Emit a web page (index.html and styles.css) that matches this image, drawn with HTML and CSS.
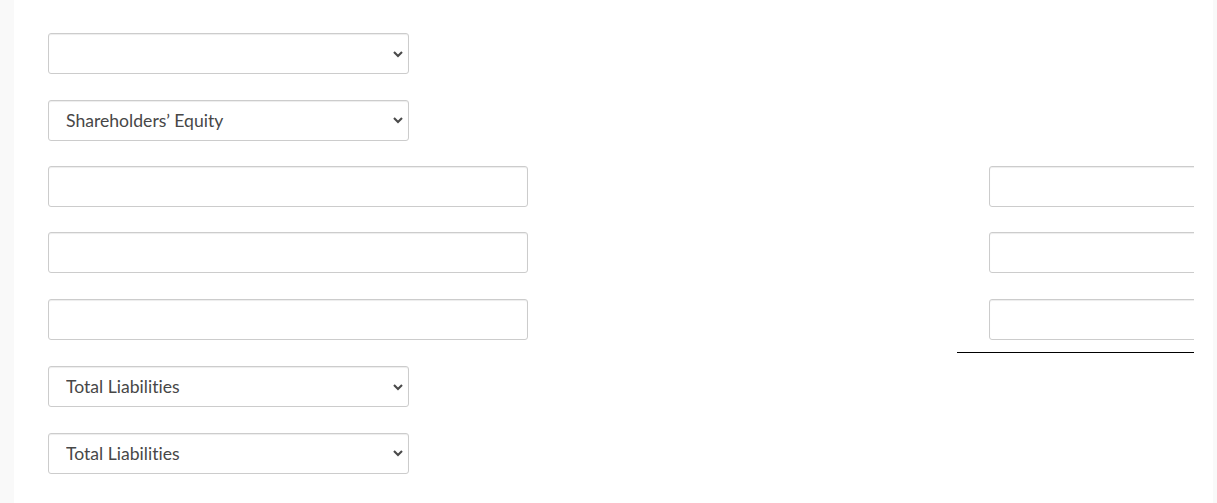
FILE: index.html
```html
<!DOCTYPE html>
<html lang="en">
<head>
<meta charset="utf-8">
<title>Balance sheet</title>
<link rel="stylesheet" href="styles.css">
</head>
<body>
<div class="page">
  <div class="sheet">
    <div class="row">
      <div class="cell-left">
        <div class="select-wrap">
          <select class="pick"><option></option><option>Shareholders’ Equity</option><option>Total Liabilities</option></select>
          <svg class="chevron" viewBox="0 0 12 8" width="12" height="8" aria-hidden="true"><polyline points="2,2 6,6 10,2"/></svg>
        </div>
      </div>
      <div class="cell-right"></div>
    </div>
    <div class="row">
      <div class="cell-left">
        <div class="select-wrap">
          <select class="pick"><option selected>Shareholders’ Equity</option><option>Total Liabilities</option></select>
          <svg class="chevron" viewBox="0 0 12 8" width="12" height="8" aria-hidden="true"><polyline points="2,2 6,6 10,2"/></svg>
        </div>
      </div>
      <div class="cell-right"></div>
    </div>
    <div class="row">
      <div class="cell-left"><input class="field field-wide" type="text"></div>
      <div class="cell-right"><input class="field field-amount" type="text"></div>
    </div>
    <div class="row">
      <div class="cell-left"><input class="field field-wide" type="text"></div>
      <div class="cell-right"><input class="field field-amount" type="text"></div>
    </div>
    <div class="row row-before-rule">
      <div class="cell-left"><input class="field field-wide" type="text"></div>
      <div class="cell-right"><input class="field field-amount" type="text"></div>
    </div>
    <div class="rule-row">
      <div class="cell-left"></div>
      <div class="cell-right rule"></div>
    </div>
    <div class="row">
      <div class="cell-left">
        <div class="select-wrap">
          <select class="pick"><option selected>Total Liabilities</option><option>Shareholders’ Equity</option></select>
          <svg class="chevron" viewBox="0 0 12 8" width="12" height="8" aria-hidden="true"><polyline points="2,2 6,6 10,2"/></svg>
        </div>
      </div>
      <div class="cell-right"></div>
    </div>
    <div class="row">
      <div class="cell-left">
        <div class="select-wrap">
          <select class="pick"><option selected>Total Liabilities</option><option>Shareholders’ Equity</option></select>
          <svg class="chevron" viewBox="0 0 12 8" width="12" height="8" aria-hidden="true"><polyline points="2,2 6,6 10,2"/></svg>
        </div>
      </div>
      <div class="cell-right"></div>
    </div>
  </div>
</div>
</body>
</html>
```
FILE: styles.css
```css
html, body {
  margin: 0;
  padding: 0;
}
body {
  background: #f9f9f9;
  font-family: Lato, "Liberation Sans", sans-serif;
  height: 503px;
  overflow: hidden;
}
.page {
  margin-left: 14px;
  width: 1199px;
  height: 503px;
  background: #ffffff;
  padding: 33.2px 19px 0 34px;
  box-sizing: border-box;
}
.sheet {
  display: flex;
  flex-direction: column;
  overflow: hidden;
}
.row,
.rule-row {
  display: grid;
  grid-template-columns: 909px 237px;
}
.row {
  height: 41px;
  margin-bottom: 25.4px;
}
.row-before-rule {
  margin-bottom: 12px;
}
.rule-row {
  height: 1px;
  margin-bottom: 13.6px;
}
.cell-right {
  overflow: hidden;
}
.rule {
  background: #000000;
}
.select-wrap {
  position: relative;
  width: 361px;
  height: 41px;
}
.chevron {
  position: absolute;
  right: 5px;
  top: 50%;
  transform: translateY(-50%);
  fill: none;
  stroke: #4a4a4a;
  stroke-width: 2.1;
  pointer-events: none;
}
.pick,
.field {
  box-sizing: border-box;
  height: 41px;
  border: 1px solid #cccccc;
  border-radius: 3px;
  background-color: #ffffff;
  box-shadow: inset 0 1px 1px rgba(0, 0, 0, 0.075);
  font-family: Lato, "Liberation Sans", sans-serif;
  font-size: 17.6px;
  font-variant-ligatures: none;
  color: #474747;
  margin: 0;
}
.pick {
  -webkit-appearance: none;
  appearance: none;
  width: 361px;
  padding: 0 28px 0 17px;
}
.field {
  padding: 0 12px;
}
.field-wide {
  width: 480px;
}
.field-amount {
  width: 260px;
  margin-left: 32px;
}
```
